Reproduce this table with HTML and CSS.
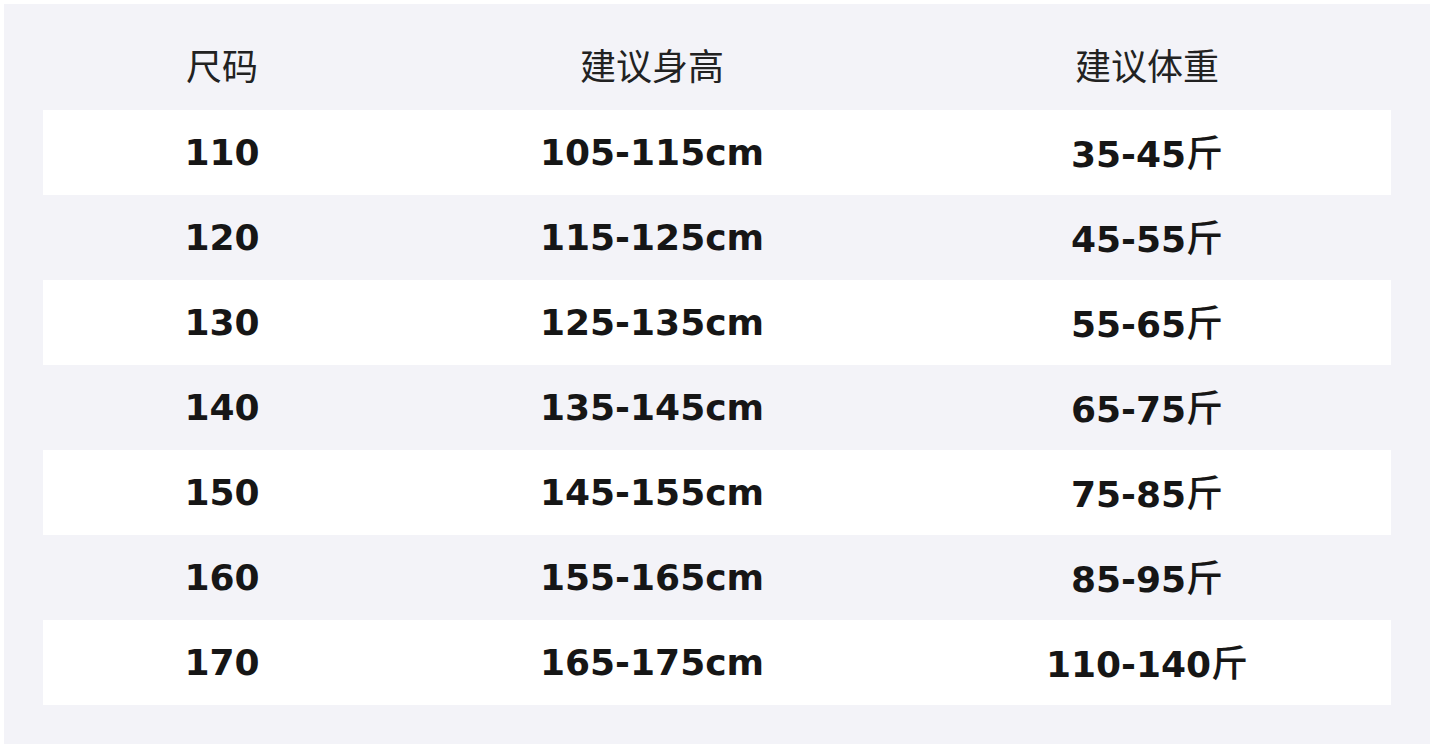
FILE: index.html
```html
<!DOCTYPE html>
<html lang="zh">
<head>
<meta charset="utf-8">
<title>尺码表</title>
<link rel="stylesheet" href="styles.css">
</head>
<body>
<div class="panel">
  <div class="head">
    <div class="cell">尺码</div>
    <div class="cell">建议身高</div>
    <div class="cell">建议体重</div>
  </div>
  <div class="row white"><div class="cell">110</div><div class="cell">105-115cm</div><div class="cell">35-45<span class="unit">斤</span></div></div>
  <div class="row"><div class="cell">120</div><div class="cell">115-125cm</div><div class="cell">45-55<span class="unit">斤</span></div></div>
  <div class="row white"><div class="cell">130</div><div class="cell">125-135cm</div><div class="cell">55-65<span class="unit">斤</span></div></div>
  <div class="row"><div class="cell">140</div><div class="cell">135-145cm</div><div class="cell">65-75<span class="unit">斤</span></div></div>
  <div class="row white"><div class="cell">150</div><div class="cell">145-155cm</div><div class="cell">75-85<span class="unit">斤</span></div></div>
  <div class="row"><div class="cell">160</div><div class="cell">155-165cm</div><div class="cell">85-95<span class="unit">斤</span></div></div>
  <div class="row white"><div class="cell">170</div><div class="cell">165-175cm</div><div class="cell">110-140<span class="unit">斤</span></div></div>
</div>
</body>
</html>
```

FILE: styles.css
```css
html, body {
  margin: 0;
  padding: 0;
  background: #ffffff;
}
body {
  padding: 4px;
}
.panel {
  width: 1426px;
  height: 740px;
  box-sizing: border-box;
  background: #f3f3f8;
  padding: 39px 39px 0 39px;
}
.head, .row {
  display: grid;
  grid-template-columns: 358px 502px 488px;
}
.head {
  height: 67px;
  align-items: start;
  font-family: "Noto Sans CJK SC", "Noto Sans", sans-serif;
  font-size: 36px;
  line-height: 42px;
  color: #222222;
}
.row {
  height: 85px;
  align-items: center;
  font-family: "DejaVu Sans", "Noto Sans CJK SC", sans-serif;
  font-weight: bold;
  font-size: 36px;
  line-height: 40px;
  color: #161616;
}
.row.white {
  background: #ffffff;
}
.cell {
  text-align: center;
}
.unit {
  font-family: "Noto Sans CJK SC", sans-serif;
  font-weight: 500;
  font-size: 37px;
  line-height: 40px;
}
```
